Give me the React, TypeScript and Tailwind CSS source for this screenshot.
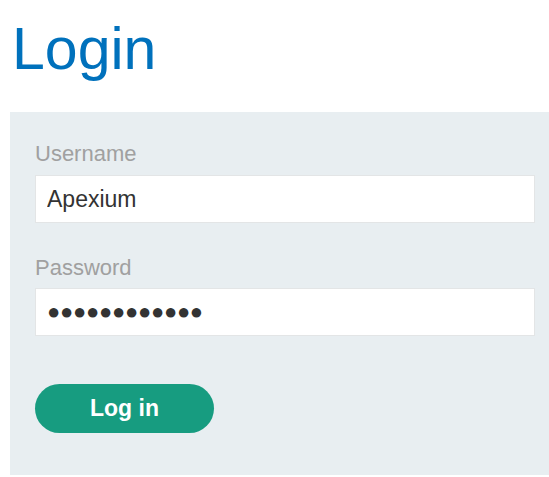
import React from "react";

export default function App() {
  return (
    <div className="w-[549px] h-[477px] bg-white pt-[20px] overflow-hidden" style={{ fontFamily: '"Liberation Sans", Arial, sans-serif' }}>
      <h1 className="ml-[12px] text-[59px] leading-none text-[#0071bc] font-normal">Login</h1>
      <div className="ml-[10px] mt-[33px] h-[363px] bg-[#e8eef1] pl-[25px] pr-[14px] pt-[31px]">
        <label className="block text-[22px] leading-none h-[22px] text-[#a0a0a0]">Username</label>
        <input
          readOnly
          value="Apexium"
          className="mt-[10px] block w-[500px] h-[48px] bg-white border border-[#e3e5e6] px-[11px] text-[23px] text-[#333333] outline-none"
        />
        <label className="mt-[34px] block text-[22px] leading-none h-[22px] text-[#a0a0a0]">Password</label>
        <div className="mt-[9px] flex items-center w-[500px] h-[48px] bg-white border border-[#e3e5e6] px-[11px] text-[22px] leading-none text-[#333333]">
          <span className="tracking-[-0.3px]">●●●●●●●●●●●●</span>
        </div>
        <button className="mt-[48px] w-[179px] h-[49px] rounded-full bg-[#179c80] text-white font-bold text-[23px] leading-none">
          Log in
        </button>
      </div>
    </div>
  );
}
